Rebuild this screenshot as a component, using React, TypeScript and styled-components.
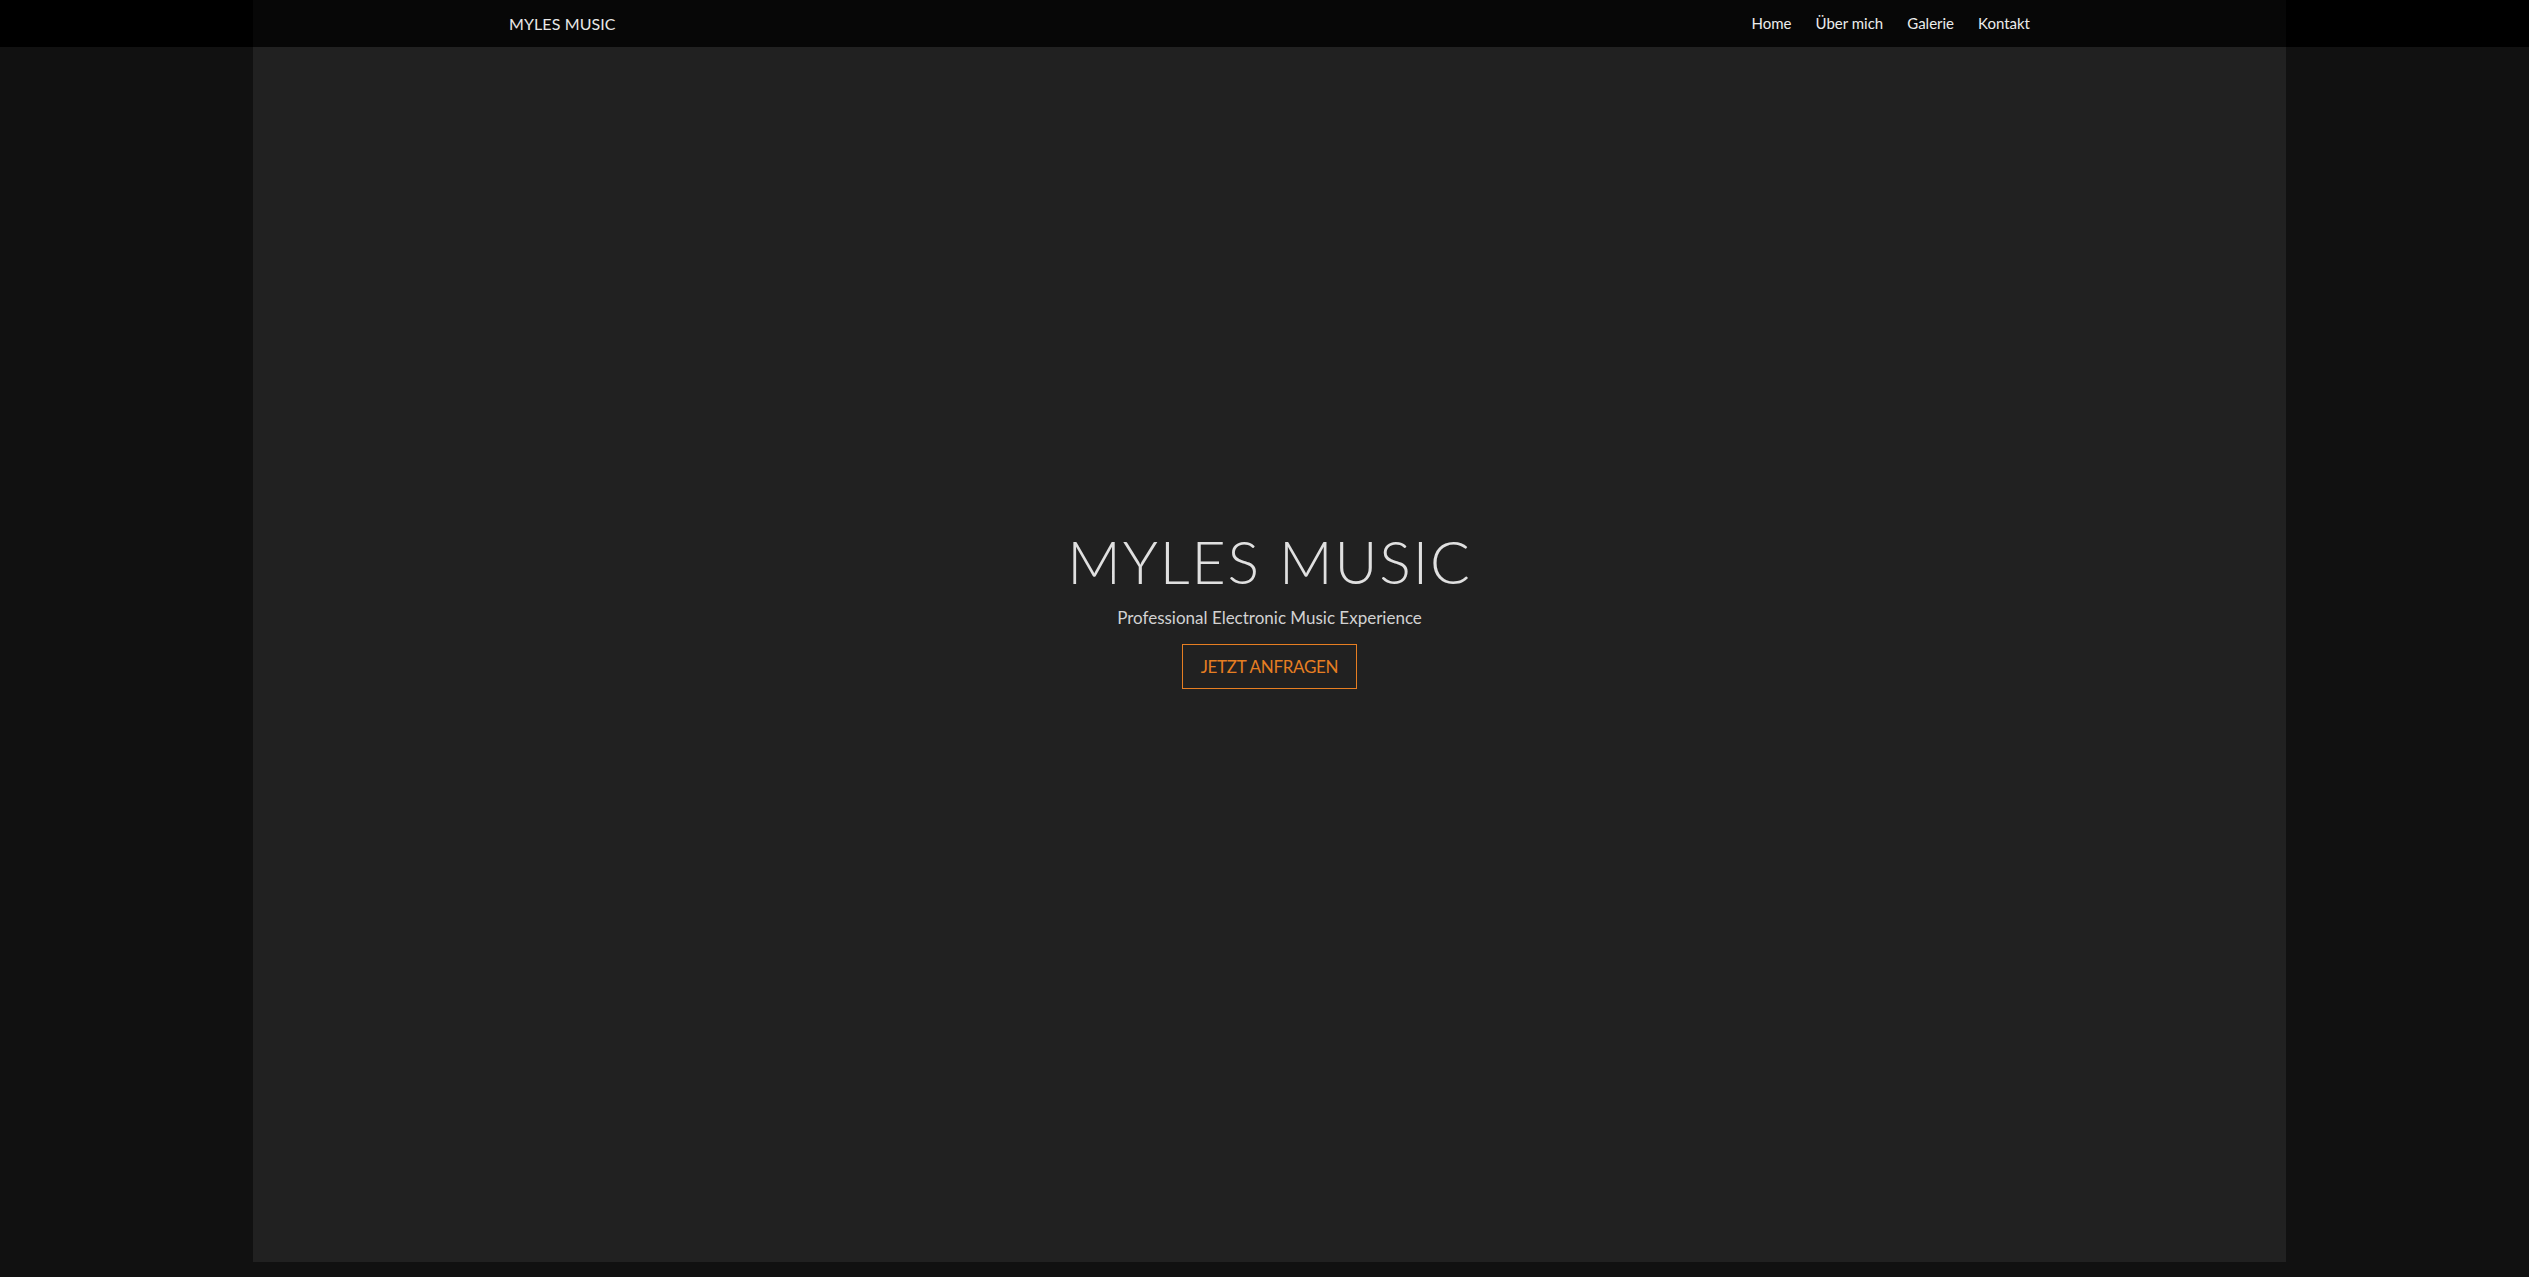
import React from "react";
import styled, { createGlobalStyle } from "styled-components";

const GlobalStyle = createGlobalStyle`
  html, body {
    margin: 0;
    padding: 0;
    background: #111111;
  }
  body {
    font-family: Lato, "Open Sans", "Liberation Sans", sans-serif;
    -webkit-font-smoothing: antialiased;
  }
  * { box-sizing: border-box; }
`;

const Shell = styled.div`
  min-height: 1277px;
  background: #111111;
  display: flex;
  flex-direction: column;
`;

const NavBar = styled.header`
  height: 47px;
  background: #000000;
  padding: 0 243px 0 253px;
  display: flex;
`;

const NavInner = styled.nav`
  flex: 1;
  background: #070707;
  display: flex;
  align-items: center;
  justify-content: space-between;
  padding: 0 256px 1px 256px;
`;

const Logo = styled.a`
  font-family: Lato, "Open Sans", sans-serif;
  font-size: 16px;
  font-weight: 400;
  color: #e8e8e8;
  text-decoration: none;
  letter-spacing: 0.1px;
`;

const Links = styled.ul`
  list-style: none;
  margin: 0;
  padding: 0;
  display: flex;
  gap: 24px;
`;

const LinkItem = styled.li`
  font-family: Lato, "Open Sans", sans-serif;
  font-size: 15px;
  font-weight: 400;
  color: #ececec;
`;

const MainRow = styled.main`
  padding: 0 243px 15px 253px;
  display: flex;
`;

const Panel = styled.section`
  flex: 1;
  height: 1215px;
  background: #212121;
  display: flex;
  flex-direction: column;
  align-items: center;
  padding-top: 485px;
`;

const Title = styled.h1`
  margin: 0;
  font-family: Lato, "Open Sans", sans-serif;
  font-size: 59px;
  line-height: 59px;
  font-weight: 300;
  color: #e0e0e0;
  letter-spacing: 1.9px;
`;

const Subtitle = styled.p`
  margin: 17px 0 0;
  font-family: Lato, "Open Sans", sans-serif;
  font-size: 17px;
  line-height: 1.2;
  font-weight: 400;
  color: #d2d2d2;
`;

const CtaButton = styled.a`
  margin-top: 16px;
  height: 45px;
  padding: 0 18px;
  border: 1px solid #e67e22;
  display: flex;
  align-items: center;
  justify-content: center;
  font-family: Lato, "Open Sans", sans-serif;
  font-size: 17px;
  font-weight: 400;
  letter-spacing: -0.3px;
  color: #e67e22;
  text-decoration: none;
  cursor: pointer;
`;

const navItems = ["Home", "Über mich", "Galerie", "Kontakt"];

export default function App() {
  return (
    <>
      <GlobalStyle />
      <Shell>
        <NavBar>
          <NavInner>
            <Logo>MYLES MUSIC</Logo>
            <Links>
              {navItems.map((item) => (
                <LinkItem key={item}>{item}</LinkItem>
              ))}
            </Links>
          </NavInner>
        </NavBar>
        <MainRow>
          <Panel>
            <Title>MYLES MUSIC</Title>
            <Subtitle>Professional Electronic Music Experience</Subtitle>
            <CtaButton>JETZT ANFRAGEN</CtaButton>
          </Panel>
        </MainRow>
      </Shell>
    </>
  );
}
